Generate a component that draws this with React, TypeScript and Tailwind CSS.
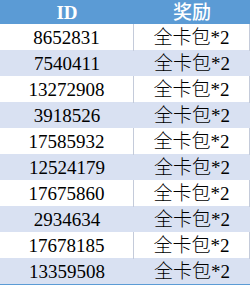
const ids = [
  "8652831",
  "7540411",
  "13272908",
  "3918526",
  "17585932",
  "12524179",
  "17675860",
  "2934634",
  "17678185",
  "13359508",
];

export default function App() {
  return (
    <div className="w-[251px] h-[285px] bg-white overflow-hidden">
      <div className="w-[250px] border-b border-[#5B9BD5]">
        <div
          className="grid grid-cols-[134px_116px] h-[24px] bg-[#5B9BD5] text-white text-[19px] font-bold leading-[25px] text-center"
          style={{ fontFamily: '"Liberation Serif", "Noto Sans CJK SC", serif' }}
        >
          <div>ID</div>
          <div className="font-medium">奖励</div>
        </div>
        {ids.map((id, i) => {
          const shaded = i % 2 === 1;
          return (
            <div
              key={id}
              className={
                shaded
                  ? "grid grid-cols-[134px_116px] h-[26px] bg-[#D9E1F2] text-black text-[19px] leading-[27px] text-center"
                  : "grid grid-cols-[134px_116px] h-[26px] bg-white text-black text-[19px] leading-[27px] text-center"
              }
              style={{ fontFamily: '"Liberation Serif", "Noto Sans CJK SC", serif' }}
            >
              <div className={shaded ? "" : "border-r border-[#C4CBDA]"}>{id}</div>
              <div className={shaded ? "font-light" : "font-light border-r border-[#C4CBDA]"}>
                全卡包*2
              </div>
            </div>
          );
        })}
      </div>
    </div>
  );
}
